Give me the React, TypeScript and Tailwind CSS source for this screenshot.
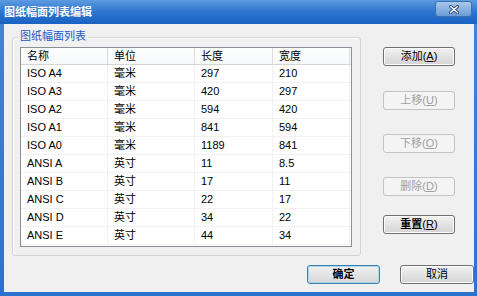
import React from "react";

const rows = [
  ["ISO A4", "毫米", "297", "210"],
  ["ISO A3", "毫米", "420", "297"],
  ["ISO A2", "毫米", "594", "420"],
  ["ISO A1", "毫米", "841", "594"],
  ["ISO A0", "毫米", "1189", "841"],
  ["ANSI A", "英寸", "11", "8.5"],
  ["ANSI B", "英寸", "17", "11"],
  ["ANSI C", "英寸", "22", "17"],
  ["ANSI D", "英寸", "34", "22"],
  ["ANSI E", "英寸", "44", "34"],
];

const cols = ["w-[87px]", "w-[87px]", "w-[78px]", "w-[77px]"];

const Btn = ({
  label,
  hot,
  disabled,
  primary,
  bold,
  w = "w-[72px]",
}: {
  label: string;
  hot?: string;
  disabled?: boolean;
  primary?: boolean;
  bold?: boolean;
  w?: string;
}) => (
  <div
    className={`${w} h-[19px] flex items-center justify-center rounded-[3px] border ${
      disabled
        ? "border-[#c4c4c4] bg-[#f4f4f4] text-[#a0a0a0]"
        : primary
        ? "border-[#3c7fb1] bg-gradient-to-b from-[#f2f2f2] to-[#d6d6d6] text-black shadow-[inset_0_0_0_1px_#a8d8f0]"
        : "border-[#707070] bg-gradient-to-b from-[#f2f2f2] to-[#d4d4d4] text-black shadow-[inset_0_0_0_1px_#fcfcfc]"
    }`}
  >
    <span className={bold ? "font-bold" : ""}>{label}</span>
    {hot && (
      <>
        (<span className="underline">{hot}</span>)
      </>
    )}
  </div>
);

export default function App() {
  return (
    <div
      className="w-[477px] h-[296px] flex flex-col bg-gradient-to-b from-[#3f86d6] to-[#2a72cf] text-[11px] leading-none"
      style={{ fontFamily: '"Liberation Sans", "Noto Sans CJK SC", sans-serif' }}
    >
      {/* Title bar */}
      <div className="h-[24px] flex items-start justify-between pl-[4px] pr-[5px] bg-gradient-to-b from-[#5d9be0] via-[#2c74d0] to-[#1a62c2]">
        <div className="pt-[7px] text-white font-bold text-[11px]">图纸幅面列表编辑</div>
        <div className="w-[37px] h-[16px] mt-[1px] rounded-[3px] border border-[#3b6fb0] bg-gradient-to-b from-[#a9c9ec] to-[#6a9cd6] flex items-center justify-center">
          <svg width="10" height="9" viewBox="0 0 10 9">
            <path d="M1.5 1.5 L8.5 7.5 M8.5 1.5 L1.5 7.5" stroke="#25446e" strokeWidth="3" strokeLinecap="round" />
            <path d="M1.5 1.5 L8.5 7.5 M8.5 1.5 L1.5 7.5" stroke="#ffffff" strokeWidth="1.6" strokeLinecap="round" />
          </svg>
        </div>
      </div>

      {/* Body */}
      <div className="ml-[4px] mr-[3px] h-[268px] bg-[#f0f0f0] flex flex-col">
        <div className="flex">
          {/* Group box */}
          <div className="relative ml-[8px] mt-[13px] w-[349px] h-[219px] border border-[#d0d4d8] rounded-[3px] shadow-[inset_1px_1px_0_#ffffff]">
            <span className="absolute -top-[7px] left-[5px] px-[2px] bg-[#f0f0f0] text-[#1e5bc6]">图纸幅面列表</span>
            <div className="ml-[7px] mt-[9px] w-[332px] h-[200px] border border-[#8a9096] bg-white flex flex-col">
              <div className="flex h-[17px] border-b border-[#d5d5d5] bg-gradient-to-b from-white to-[#f7f8f9]">
                {["名称", "单位", "长度", "宽度"].map((h, i) => (
                  <div key={h} className={`${cols[i]} pl-[6px] flex items-center border-r border-[#dcdcdc]`}>
                    {h}
                  </div>
                ))}
              </div>
              {rows.map((r) => (
                <div key={r[0]} className="flex h-[18px] border-b border-[#f2f2f2]">
                  {r.map((c, i) => (
                    <div key={i} className={`${cols[i]} pl-[6px] flex items-center border-r border-[#f2f2f2]`}>
                      {c}
                    </div>
                  ))}
                </div>
              ))}
            </div>
          </div>

          {/* Side buttons */}
          <div className="ml-[22px] mt-[23px] flex flex-col">
            <Btn label="添加" hot="A" />
            <div className="mt-[25px]">
              <Btn label="上移" hot="U" disabled />
            </div>
            <div className="mt-[24px]">
              <Btn label="下移" hot="O" disabled />
            </div>
            <div className="mt-[24px]">
              <Btn label="删除" hot="D" disabled />
            </div>
            <div className="mt-[19px]">
              <Btn label="重置" hot="R" bold />
            </div>
          </div>
        </div>

        {/* Bottom buttons */}
        <div className="flex justify-end gap-[20px] mt-[9px]">
          <Btn label="确定" primary bold w="w-[73px]" />
          <Btn label="取消" w="w-[74px]" />
        </div>
      </div>
    </div>
  );
}
